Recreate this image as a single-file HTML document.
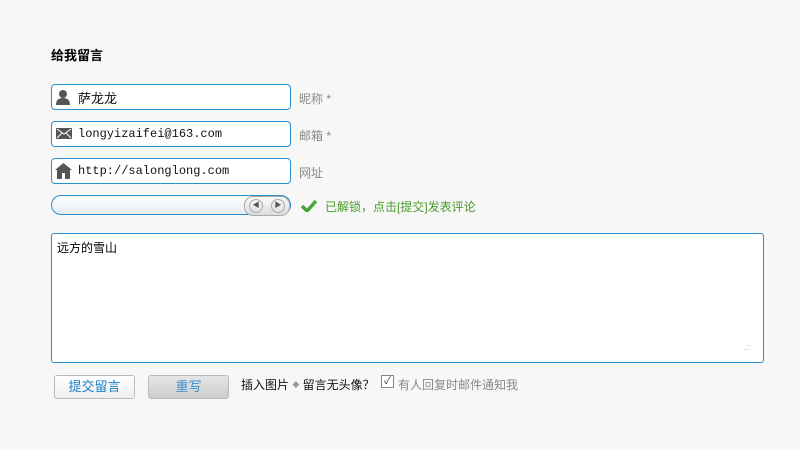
<!DOCTYPE html>
<html><head><meta charset="utf-8"><style>
body{margin:0;width:800px;height:450px;background:#f7f7f7;font-family:"Liberation Sans","Noto Sans CJK SC",sans-serif;font-size:12px;position:relative;overflow:hidden}
.a{position:absolute}
.inp{position:absolute;left:51px;width:238px;height:24px;border:1px solid #2a8fd0;border-radius:4px;background:#fff}
.inp span{position:absolute;left:26px;top:5px;font-family:"Liberation Mono","Noto Sans CJK SC",monospace;font-size:12px;color:#111}
.lbl{position:absolute;left:299px;color:#888;font-size:12px}
.btn{position:absolute;top:375px;height:22px;border:1px solid #bbb;border-radius:3px;text-align:center;line-height:22px;font-size:13px}
</style></head><body>
<div class="a" style="left:51px;top:45px;font-weight:bold;font-size:13px">给我留言</div>

<div class="inp" style="top:84px"><svg class="a" style="left:4px;top:4px" width="14" height="16"><circle cx="7" cy="5" r="4" fill="#555"/><path d="M0 16 Q0 9 7 9 Q14 9 14 16Z" fill="#555"/></svg><span style="font-family:'Liberation Sans','Noto Sans CJK SC',sans-serif;font-size:13px;top:3px">萨龙龙</span></div>
<div class="lbl" style="top:90px">昵称 *</div>

<div class="inp" style="top:121px"><svg class="a" style="left:4px;top:6px" width="16" height="11"><rect width="16" height="11" fill="#555"/><path d="M1 1 L8 6 L15 1 M1 10 L6 5 M15 10 L10 5" stroke="#fff" fill="none"/></svg><span>longyizaifei@163.com</span></div>
<div class="lbl" style="top:127px">邮箱 *</div>

<div class="inp" style="top:158px"><svg class="a" style="left:3px;top:4px" width="17" height="16"><path d="M8.5 0 L17 7 L15 7 L15 16 L2 16 L2 7 L0 7Z" fill="#555"/><rect x="7" y="10" width="3" height="6" fill="#fff"/></svg><span>http://salonglong.com</span></div>
<div class="lbl" style="top:164px">网址</div>

<div class="a" style="left:51px;top:195px;width:238px;height:18px;border:1px solid #2a8fd0;border-radius:10px;background:linear-gradient(#fff,#e6ecf2)"></div>
<div class="a" style="left:244px;top:196px;width:44px;height:18px;border:1px solid #aaa;border-radius:9px;background:linear-gradient(#fafafa,#ddd)"></div>
<div class="a" style="left:249px;top:199px;width:12px;height:12px;border:1px solid #aaa;border-radius:7px;font-size:7px;line-height:12px;text-align:center;color:#555">◀</div>
<div class="a" style="left:271px;top:199px;width:12px;height:12px;border:1px solid #aaa;border-radius:7px;font-size:7px;line-height:12px;text-align:center;color:#555">▶</div>
<svg class="a" style="left:301px;top:199px" width="16" height="13"><path d="M1 7 L6 12 L15 2" stroke="#4aa63a" stroke-width="3.5" fill="none"/></svg>
<div class="a" style="left:325px;top:198px;color:#4a9a2a;font-size:12px">已解锁，点击[提交]发表评论</div>

<div class="a" style="left:51px;top:233px;width:711px;height:128px;border:1px solid #2a8fd0;border-radius:3px;background:#fff"></div>
<div class="a" style="left:57px;top:239px;font-size:12px">远方的雪山</div>
<div class="a" style="left:744px;top:342px;color:#aaa;font-size:9px">.:ː</div>

<div class="btn" style="left:54px;width:79px;background:linear-gradient(#fff,#eee);color:#1a7fc8">提交留言</div>
<div class="btn" style="left:148px;width:79px;background:linear-gradient(#e6e6e6,#ccc);color:#3a90d0">重写</div>
<div class="a" style="left:241px;top:376px;font-size:12px;color:#111">插入图片 <span style="color:#999;font-size:7px;vertical-align:2px">◆</span> 留言无头像？</div>
<div class="a" style="left:381px;top:375px;width:11px;height:11px;border:1px solid #888;background:#fff;font-size:10px;line-height:11px;text-align:center;color:#334">✓</div>
<div class="a" style="left:398px;top:376px;color:#888;font-size:12px">有人回复时邮件通知我</div>
</body></html>
